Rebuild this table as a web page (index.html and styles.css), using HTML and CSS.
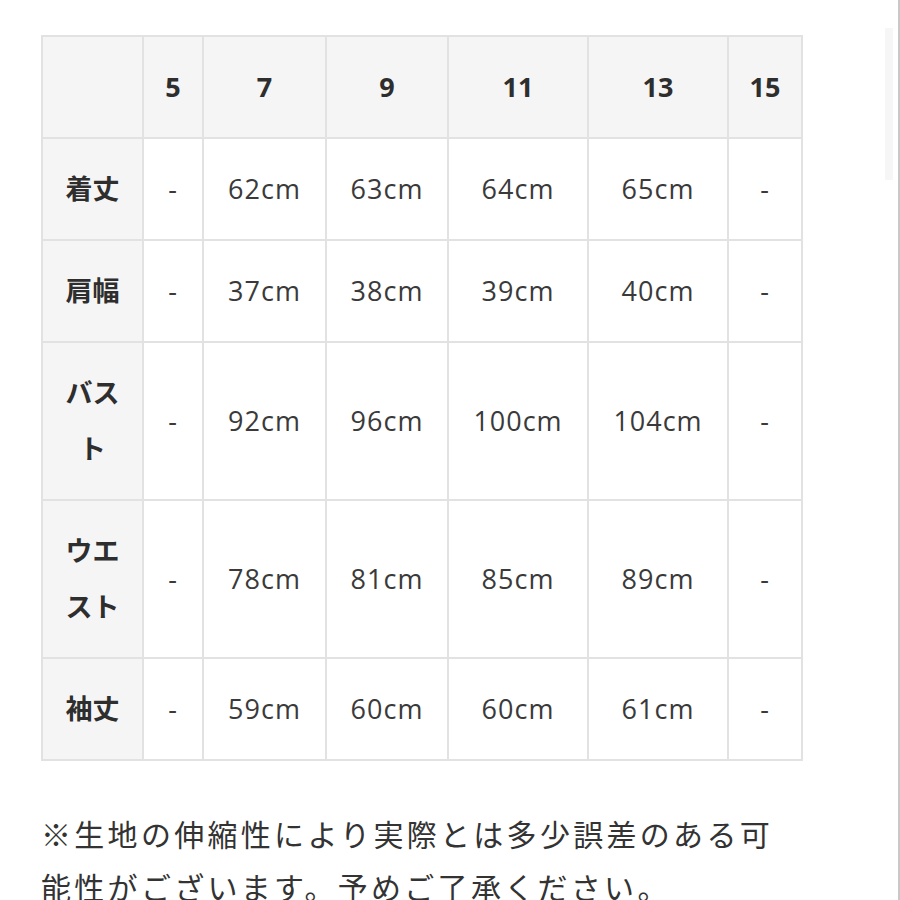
FILE: index.html
```html
<!DOCTYPE html>
<html lang="ja">
<head>
<meta charset="utf-8">
<link rel="stylesheet" href="styles.css">
</head>
<body>
<div class="page">
  <main class="content">
    <table class="size-table">
      <colgroup>
        <col class="c-label"><col class="c5"><col class="c7"><col class="c9"><col class="c11"><col class="c13"><col class="c15">
      </colgroup>
      <thead>
        <tr><th class="corner"></th><th>5</th><th>7</th><th>9</th><th>11</th><th>13</th><th>15</th></tr>
      </thead>
      <tbody>
        <tr><th class="label">着丈</th><td>-</td><td>62cm</td><td>63cm</td><td>64cm</td><td>65cm</td><td>-</td></tr>
        <tr><th class="label">肩幅</th><td>-</td><td>37cm</td><td>38cm</td><td>39cm</td><td>40cm</td><td>-</td></tr>
        <tr><th class="label">バスト</th><td>-</td><td>92cm</td><td>96cm</td><td>100cm</td><td>104cm</td><td>-</td></tr>
        <tr><th class="label">ウエスト</th><td>-</td><td>78cm</td><td>81cm</td><td>85cm</td><td>89cm</td><td>-</td></tr>
        <tr><th class="label">袖丈</th><td>-</td><td>59cm</td><td>60cm</td><td>60cm</td><td>61cm</td><td>-</td></tr>
      </tbody>
    </table>
    <p class="note">※生地の伸縮性により実際とは多少誤差のある可能性がございます。予めご了承ください。</p>
  </main>
  <aside class="side"><div class="side-bar"></div></aside>
</div>
</body>
</html>
```
FILE: styles.css
```css
html, body {
  margin: 0;
  padding: 0;
  background: #fff;
}
.page {
  display: flex;
  width: 900px;
  height: 900px;
  box-sizing: border-box;
  border-right: 2px solid #c8c8c8;
  overflow: hidden;
  font-family: "Open Sans", "Noto Sans CJK JP", sans-serif;
  color: #3a3a3a;
}
.content {
  width: 842px;
  padding: 35px 0 0 41px;
  box-sizing: border-box;
}
.size-table {
  border-collapse: collapse;
  table-layout: fixed;
  width: 760px;
  font-size: 27px;
}
.c-label { width: 101px; }
.c5 { width: 60px; }
.c7 { width: 123px; }
.c9 { width: 122px; }
.c11 { width: 140px; }
.c13 { width: 140px; }
.c15 { width: 74px; }
.size-table th,
.size-table td {
  border: 2px solid #e2e2e2;
  text-align: center;
  vertical-align: middle;
  line-height: 56px;
  padding: 22px 0;
}
.size-table thead th {
  background: #f5f5f5;
  font-weight: 700;
  color: #2e2e2e;
}
.size-table th.label {
  background: #f5f5f5;
  font-weight: 700;
  color: #2e2e2e;
  padding-left: 14px;
  padding-right: 14px;
}
.size-table td {
  background: #fff;
  font-weight: 400;
  letter-spacing: 1px;
}
.note {
  margin: 47px 0 0 0;
  font-size: 30px;
  letter-spacing: 3.3px;
  line-height: 53px;
  width: 760px;
  color: #333;
}
.side {
  flex: 1;
  display: flex;
  justify-content: flex-end;
  padding-top: 28px;
  padding-right: 5px;
}
.side-bar {
  width: 8px;
  height: 152px;
  background: #f6f6f6;
}
```
